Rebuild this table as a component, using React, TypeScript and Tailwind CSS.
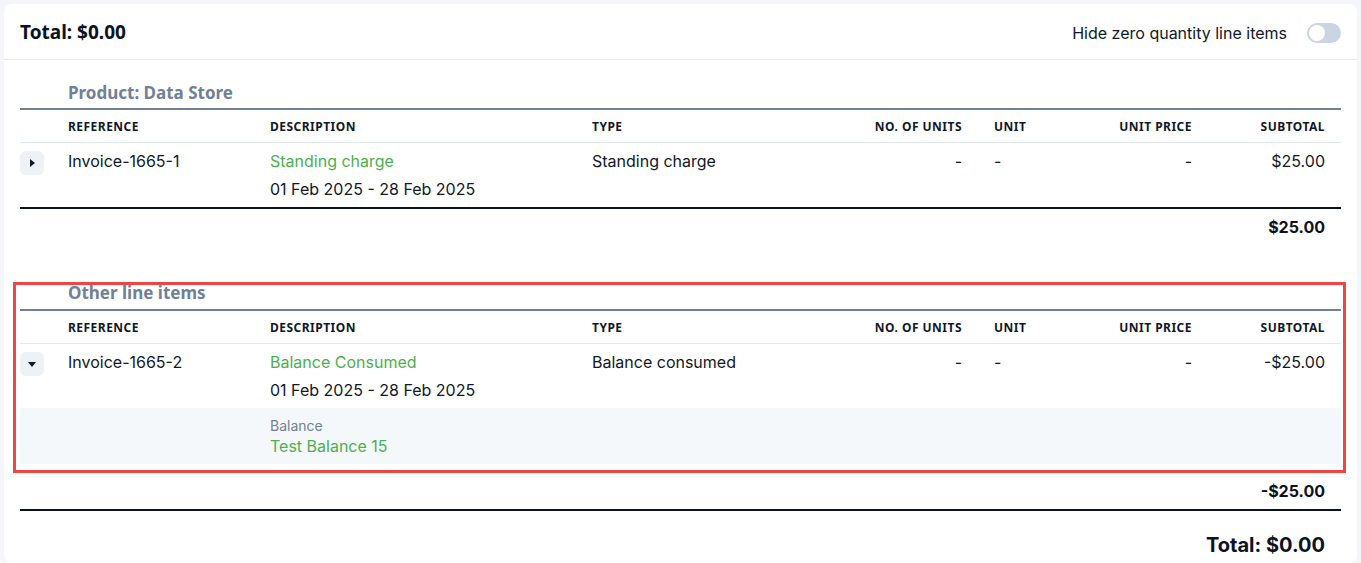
import React from "react";

const cols = "grid grid-cols-[32px_202px_322px_242px_160px_102px_128px_133px]";
const body = { fontFamily: "Inter, 'Noto Sans', sans-serif" } as React.CSSProperties;
const head = { fontFamily: "'Noto Sans', 'Open Sans', sans-serif" } as React.CSSProperties;

function HeaderRow() {
  return (
    <div className={`${cols} h-[33px] items-center border-b border-[#e2e8f0] pt-[2px] text-[12px] font-bold tracking-[0.04em] text-[#0f172a] uppercase`} style={head}>
      <div />
      <div className="pl-4">Reference</div>
      <div className="pl-4">Description</div>
      <div className="pl-4">Type</div>
      <div className="pr-4 text-right">No. of units</div>
      <div className="pl-4">Unit</div>
      <div className="pr-4 text-right">Unit price</div>
      <div className="pr-4 text-right">Subtotal</div>
    </div>
  );
}

function Caret({ open }: { open: boolean }) {
  return (
    <div className="mt-0.5 flex h-6 w-6 items-center justify-center rounded-md bg-[#edf2f7]">
      {open ? (
        <svg width="8" height="5" viewBox="0 0 8 5"><path d="M0 0h8L4 5z" fill="#111827" /></svg>
      ) : (
        <svg width="5" height="8" viewBox="0 0 5 8"><path d="M0 0v8l5-4z" fill="#111827" /></svg>
      )}
    </div>
  );
}

function DataRow({ open, reference, desc, type, subtotal, border }: { open: boolean; reference: string; desc: string; type: string; subtotal: string; border: boolean }) {
  return (
    <div className={`${cols} py-1.5 text-[16px] leading-6 text-[#111827] ${border ? "border-b-2 border-[#0b1220]" : ""}`}>
      <div><Caret open={open} /></div>
      <div className="pl-4">{reference}</div>
      <div className="flex flex-col gap-1 pl-4">
        <span className="text-[#4caf50]">{desc}</span>
        <span>01 Feb 2025 - 28 Feb 2025</span>
      </div>
      <div className="pl-4">{type}</div>
      <div className="pr-4 text-right">-</div>
      <div className="pl-4">-</div>
      <div className="pr-4 text-right">-</div>
      <div className="pr-4 text-right">{subtotal}</div>
    </div>
  );
}

function SectionTitle({ children, pb }: { children: React.ReactNode; pb: string }) {
  return (
    <div className={`border-b-2 border-[#718096] ${pb} pl-12 text-[17px] font-bold leading-6 text-[#718096]`} style={head}>
      {children}
    </div>
  );
}

export default function App() {
  return (
    <div className="min-h-[563px] bg-[#f4f6f9] pl-1 pr-1 pt-1" style={body}>
      <div className="min-h-[559px] rounded-lg bg-white">
        <div className="flex h-[56px] items-center justify-between border-b border-[#e5e9ef] pl-4 pr-4 pt-[2px]">
          <div className="text-[19px] font-bold text-[#0b1220]" style={head}>Total: $0.00</div>
          <div className="flex items-center gap-5">
            <span className="text-[16px] text-[#111827]">Hide zero quantity line items</span>
            <div className="flex h-5 w-[34px] items-center rounded-full bg-[#cbd5e1] px-[2px]">
              <div className="h-4 w-4 rounded-full bg-white" />
            </div>
          </div>
        </div>

        <div className="px-4 pt-[21px]">
          <SectionTitle pb="pb-[3px]">Product: Data Store</SectionTitle>
          <HeaderRow />
          <DataRow open={false} reference="Invoice-1665-1" desc="Standing charge" type="Standing charge" subtotal="$25.00" border={true} />
          <div className="pr-4 pt-1.5 text-right text-[16px] font-bold leading-6 text-[#0b1220]">$25.00</div>

          <div className="relative mt-[42px]">
            <SectionTitle pb="pb-[4px]">Other line items</SectionTitle>
            <HeaderRow />
            <DataRow open={true} reference="Invoice-1665-2" desc="Balance Consumed" type="Balance consumed" subtotal="-$25.00" border={false} />
            <div className={`${cols} bg-[#f5f8fb] py-2`}>
              <div />
              <div />
              <div className="pl-4">
                <div className="text-[14px] leading-5 text-[#718096]">Balance</div>
                <div className="text-[16px] leading-5 text-[#4caf50]">Test Balance 15</div>
              </div>
            </div>
            <div className="pointer-events-none absolute -left-[7px] -right-[5px] top-[1px] bottom-[-9px] border-[3px] border-[#f04545]" />
          </div>

          <div className="mt-[15px] border-b-2 border-[#0b1220] pb-1.5 pr-4 text-right text-[16px] font-bold leading-6 text-[#0b1220]">-$25.00</div>
          <div className="pr-4 pt-5 text-right text-[20px] font-bold leading-7 text-[#0b1220]">Total: $0.00</div>
        </div>
      </div>
    </div>
  );
}
